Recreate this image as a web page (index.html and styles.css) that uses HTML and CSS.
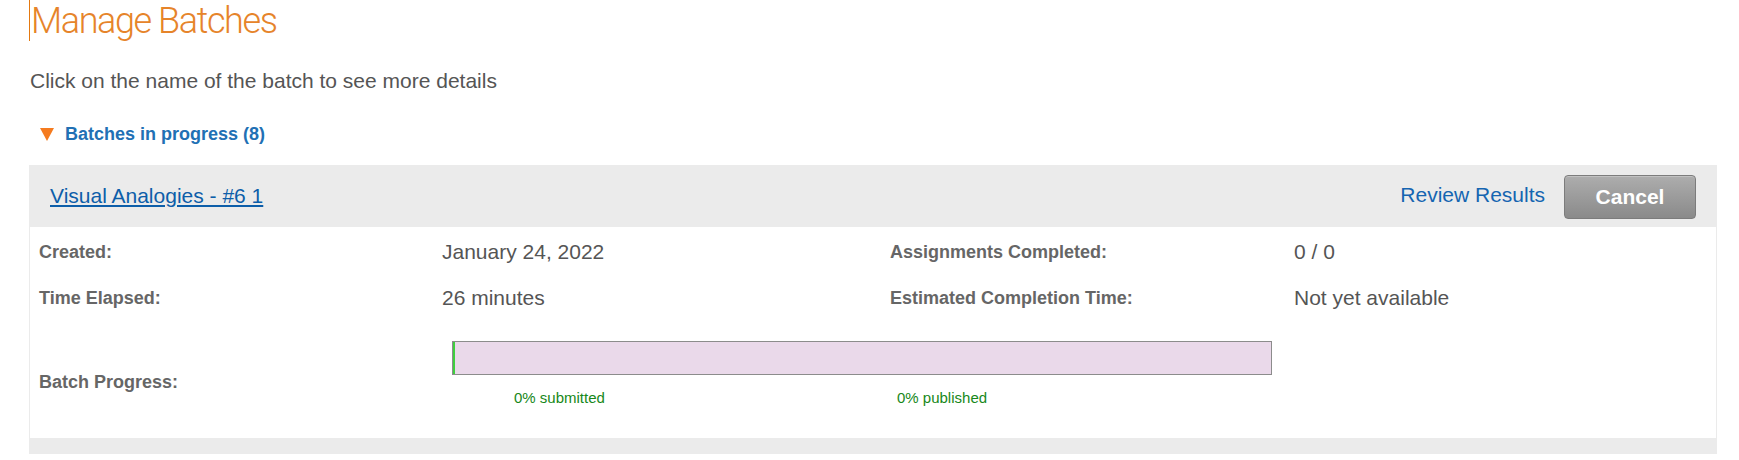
FILE: index.html
```html
<!DOCTYPE html>
<html lang="en">
<head>
<meta charset="utf-8">
<title>Manage Batches</title>
<link rel="stylesheet" href="styles.css">
</head>
<body>
<div class="page">
  <h1 class="title"><span class="caret"></span><span class="title-text">Manage Batches</span></h1>
  <p class="intro">Click on the name of the batch to see more details</p>
  <div class="section-toggle">
    <svg class="toggle-icon" width="14" height="13" viewBox="0 0 14 13" aria-hidden="true"><polygon points="0,0 14,0 7,13" fill="#f57b1f"/></svg>
    <a class="toggle-link" href="#">Batches in progress (8)</a>
  </div>

  <div class="batch">
    <div class="batch-header">
      <a class="batch-name" href="#">Visual Analogies - #6 1</a>
      <div class="batch-actions">
        <a class="review-link" href="#">Review Results</a>
        <button class="cancel-btn" type="button">Cancel</button>
      </div>
    </div>
    <div class="batch-body">
      <div class="detail-row">
        <div class="label">Created:</div>
        <div class="value">January 24, 2022</div>
        <div class="label">Assignments Completed:</div>
        <div class="value">0 / 0</div>
      </div>
      <div class="detail-row">
        <div class="label">Time Elapsed:</div>
        <div class="value">26 minutes</div>
        <div class="label">Estimated Completion Time:</div>
        <div class="value">Not yet available</div>
      </div>
      <div class="progress-row">
        <div class="label progress-label">Batch Progress:</div>
        <div class="progress-cell">
          <div class="progress-bar"><div class="progress-fill" style="width:0%"></div></div>
          <div class="progress-legend">
            <span class="legend-item">0% submitted</span>
            <span class="legend-item">0% published</span>
          </div>
        </div>
      </div>
    </div>
    <div class="batch-footer"></div>
  </div>
</div>
</body>
</html>
```

FILE: styles.css
```css
html, body {
  margin: 0;
  padding: 0;
  background: #ffffff;
}

body {
  font-family: "Liberation Sans", Arial, Helvetica, sans-serif;
  color: #555555;
}

.page {
  padding: 0 22px 0 29px;
}

.title {
  display: flex;
  align-items: flex-start;
  margin: 0;
  font-family: Roboto, "Liberation Sans", sans-serif;
  font-weight: 300;
  font-size: 36px;
  line-height: 40px;
  color: #e6842a;
  padding-top: 1px;
}

.caret {
  display: block;
  width: 1px;
  height: 41px;
  margin-top: -1px;
  background: #e47911;
}

.title-text {
  display: block;
  letter-spacing: -1.4px;
  padding-left: 1px;
}

.intro {
  margin: 28px 0 0 1px;
  font-size: 21px;
  line-height: 24px;
  color: #555555;
}

.section-toggle {
  display: flex;
  align-items: center;
  margin: 30px 0 0 11px;
  height: 22px;
}

.toggle-icon {
  display: block;
  margin-right: 11px;
}

.toggle-link {
  font-size: 18px;
  font-weight: bold;
  line-height: 22px;
  color: #2170b4;
  text-decoration: none;
}

.batch {
  margin-top: 20px;
  background: #ebebeb;
}

.batch-header {
  display: flex;
  align-items: center;
  justify-content: space-between;
  height: 62px;
  padding: 0 21px 0 21px;
}

.batch-name {
  font-size: 21px;
  line-height: 24px;
  color: #0d5ea9;
  text-decoration: underline;
  text-underline-offset: 2px;
}

.batch-actions {
  display: flex;
  align-items: center;
  gap: 19px;
  padding-top: 2px;
}

.review-link {
  font-size: 21px;
  line-height: 24px;
  color: #1565b1;
  text-decoration: none;
  margin-top: -4px;
}

.cancel-btn {
  width: 132px;
  height: 44px;
  border: 1px solid #7c7c7c;
  border-radius: 4px;
  background: linear-gradient(#adadad, #8a8a8a);
  color: #ffffff;
  font-family: "Liberation Sans", Arial, sans-serif;
  font-weight: bold;
  font-size: 21px;
  padding: 0;
  box-shadow: inset 0 1px 0 rgba(255, 255, 255, 0.25);
}

.batch-body {
  background: #ffffff;
  margin: 0 1px;
  padding: 2px 0 0 9px;
  height: 209px;
}

.detail-row {
  display: grid;
  grid-template-columns: 403px 448px 404px 1fr;
  align-items: center;
  height: 46px;
}

.label {
  font-size: 18px;
  font-weight: bold;
  color: #666666;
}

.value {
  font-size: 21px;
  color: #555555;
}

.progress-row {
  display: grid;
  grid-template-columns: 403px 1fr;
  align-items: start;
}

.progress-label {
  padding-top: 51px;
}

.progress-cell {
  padding: 20px 0 0 10px;
}

.progress-bar {
  box-sizing: border-box;
  width: 820px;
  height: 34px;
  border: 1px solid #8c8c8c;
  background: #ead9ea;
  display: flex;
}

.progress-fill {
  min-width: 2px;
  height: 100%;
  background: #3fcf3f;
}

.progress-legend {
  display: flex;
  padding-left: 62px;
  margin-top: 14px;
}

.legend-item {
  width: 383px;
  font-size: 15px;
  line-height: 18px;
  color: #17881a;
}

.batch-footer {
  height: 16px;
}
```
